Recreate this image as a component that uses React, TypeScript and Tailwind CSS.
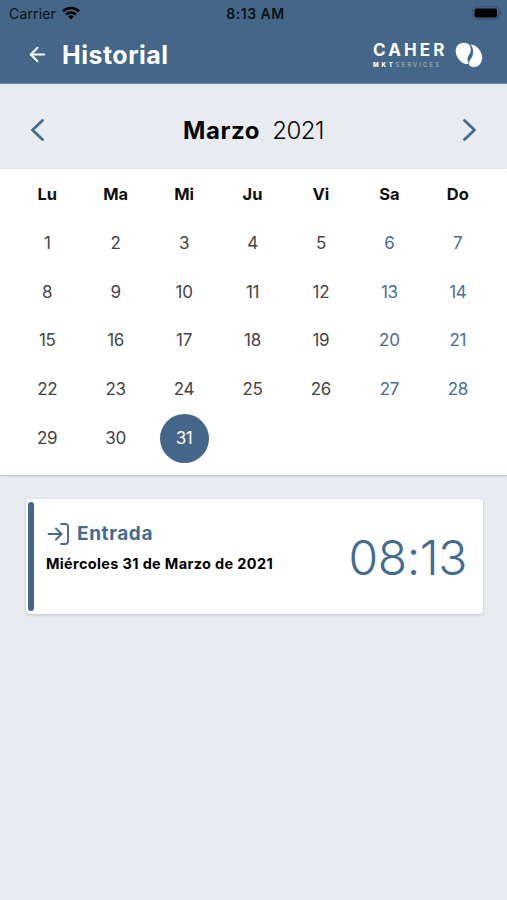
import React from 'react';
import { ArrowLeft } from 'lucide-react';

const WEEK_DAYS = ['Lu', 'Ma', 'Mi', 'Ju', 'Vi', 'Sa', 'Do'];
const DAYS = Array.from({ length: 31 }, (_, i) => i + 1);
const SELECTED_DAY = 31;

const StatusBar = () => (
  <div className="flex h-7 items-center text-[14px] leading-none text-[#0b1118]">
    <div className="flex flex-1 items-center pl-[9px]">
      <span className="text-[14px] tracking-[0.15px]">Carrier</span>
      <svg className="-mt-[2px] ml-[6px]" width="18" height="14" viewBox="0 0 18 14" fill="none" stroke="#000" strokeWidth="2.7">
        <path d="M1 5.3a11.4 11.4 0 0 1 16 0" />
        <path d="M4 8.5a7.2 7.2 0 0 1 10 0" />
        <path d="M9 13.4 6.2 10.6a4 4 0 0 1 5.6 0z" fill="#000" stroke="none" />
      </svg>
    </div>
    <span className="text-[14px] font-semibold tracking-[0.5px]">8:13 AM</span>
    <div className="flex flex-1 justify-end pr-[5px]">
      <svg className="-mt-[2px]" width="30" height="14" viewBox="0 0 30 14">
        <rect x="0.8" y="0.8" width="26" height="12.4" rx="3.6" fill="none" stroke="#34506c" strokeWidth="1" />
        <rect x="2.6" y="2.6" width="22.4" height="8.8" rx="2" fill="#000" />
        <path d="M28 5v4c1.6-.6 1.6-3.4 0-4z" fill="#2b4359" />
      </svg>
    </div>
  </div>
);

const Logo = () => (
  <div className="flex items-center text-white">
    <div className="flex w-[76px] flex-col">
      <span className="text-[17px] leading-[17px] font-bold tracking-[3.1px]">CAHER</span>
      <span className="mt-[2px] text-[6px] leading-[7px] tracking-[2.1px] whitespace-nowrap text-[#a9bccd]">
        <b className="font-extrabold tracking-[2.8px] text-white">MKT</b>SERVICES
      </span>
    </div>
    <svg className="ml-[6px]" width="28" height="26" viewBox="0 0 28 26" fill="#fff">
      <path d="M13 1.800C9.300-.1 4.100.6 1.800 4.600c-2.800 5 0 11.700 4.900 15.600 2.500 1.900 5.600 2.500 7.500.9-2.500-2.700-2-5.600-.1-8.300 2.500-3.500 2.300-8.800-1.100-11z" />
      <path d="M15 2.300c5-.2 9.800 4 11.600 9.300 1.700 5.100.2 11-4.200 13-3.300 1.400-7.300.8-8.400-1.900-.9-2.500 1-4.700 2.300-6.900 2.400-4.200 2.300-9.900-1.300-13.500z" stroke="#446688" strokeWidth="0.5" />
    </svg>
  </div>
);

const Header = () => (
  <header className="h-[84px] border-b border-[#6d88a5] bg-[#446688]">
    <StatusBar />
    <div className="flex h-[54px] items-center justify-between pr-[24px] pl-[26px]">
      <div className="flex items-center">
        <ArrowLeft className="-mt-[2px] text-white" size={23} strokeWidth={2.1} />
        <h1 className="ml-[13px] text-[25px] leading-none font-bold tracking-[0.5px] text-white">Historial</h1>
      </div>
      <Logo />
    </div>
  </header>
);

const MonthPicker = () => (
  <div className="flex h-[85px] items-center justify-between px-[30px] pt-[7px]">
    <svg width="14" height="22" viewBox="0 0 14 22" fill="none" stroke="#446b92" strokeWidth="2.8" strokeLinecap="round" strokeLinejoin="round">
      <path d="M12.500 1.500 2.500 11l10 9.500" />
    </svg>
    <div className="flex items-baseline pt-[2px] text-[24px] leading-none text-[#050608]">
      <span className="font-bold tracking-[0.6px]">Marzo</span>
      <span className="ml-[12px] font-light tracking-[-0.5px]">2021</span>
    </div>
    <svg width="14" height="22" viewBox="0 0 14 22" fill="none" stroke="#446b92" strokeWidth="2.8" strokeLinecap="round" strokeLinejoin="round">
      <path d="m1.500 1.500 10 9.500-10 9.500" />
    </svg>
  </div>
);

const Calendar = () => (
  <div className="h-[306px] bg-white pr-[15px] pl-[13px] shadow-[0_1px_2px_rgba(60,80,90,0.3)]">
    <div className="grid h-[49px] grid-cols-7 items-center pt-[2px] text-center text-[16.500px] font-bold text-[#101010]">
      {WEEK_DAYS.map((day) => (
        <span key={day}>{day}</span>
      ))}
    </div>
    <div className="grid auto-rows-[48.900px] grid-cols-7 place-items-center text-[17px] tracking-[-0.3px] text-[#444]">
      {DAYS.map((day) => {
        if (day === SELECTED_DAY) {
          return (
            <span key={day} className="flex size-[49px] items-center justify-center rounded-full bg-[#446688] pt-[2px] text-white">
              {day}
            </span>
          );
        }
        // the month starts on Monday, so the last two columns are the weekend
        const isWeekend = (day - 1) % 7 > 4;
        return (
          <span key={day} className={isWeekend ? 'pt-[2px] text-[#4c6d91]' : 'pt-[2px]'}>
            {day}
          </span>
        );
      })}
    </div>
  </div>
);

const EntryCard = () => (
  <div className="mt-[24px] mr-[24px] ml-[26px] flex h-[115px] rounded-[4px] bg-white p-[2px] shadow-[0_1px_3px_rgba(60,70,80,0.25)]">
    <div className="my-px w-[6px] rounded-[3px] bg-[#446688]" />
    <div className="flex flex-1 items-center justify-between pr-[14px] pl-[12px]">
      <div className="self-start pt-[20px]">
        <div className="flex items-center text-[#446b92]">
          <svg className="ml-px" width="23" height="24" viewBox="0 0 23 24" fill="none" stroke="currentColor" strokeWidth="1.9" strokeLinecap="round" strokeLinejoin="round">
            <path d="M1.500 12H14M9 6.500l5.500 5.500L9 17.500" />
            <path d="M14 2h4.500a2.500 2.500 0 0 1 2.500 2.500v15a2.500 2.500 0 0 1-2.500 2.500H14" />
          </svg>
          <h2 className="ml-[7px] pt-px text-[19px] leading-[24px] font-bold tracking-[0.6px]">Entrada</h2>
        </div>
        <p className="mt-[9px] text-[14.500px] leading-[18px] font-bold tracking-[0.340px] whitespace-nowrap text-black">Miércoles 31 de Marzo de 2021</p>
      </div>
      <span className="pt-[2px] text-[48px] leading-none font-light tracking-[-0.4px] text-[#446b92]">08:13</span>
    </div>
  </div>
);

const App = () => (
  <div className="h-[900px] w-full overflow-hidden bg-[#e8ecf1] font-['Inter',sans-serif]">
    <Header />
    <MonthPicker />
    <Calendar />
    <EntryCard />
  </div>
);

export default App;
